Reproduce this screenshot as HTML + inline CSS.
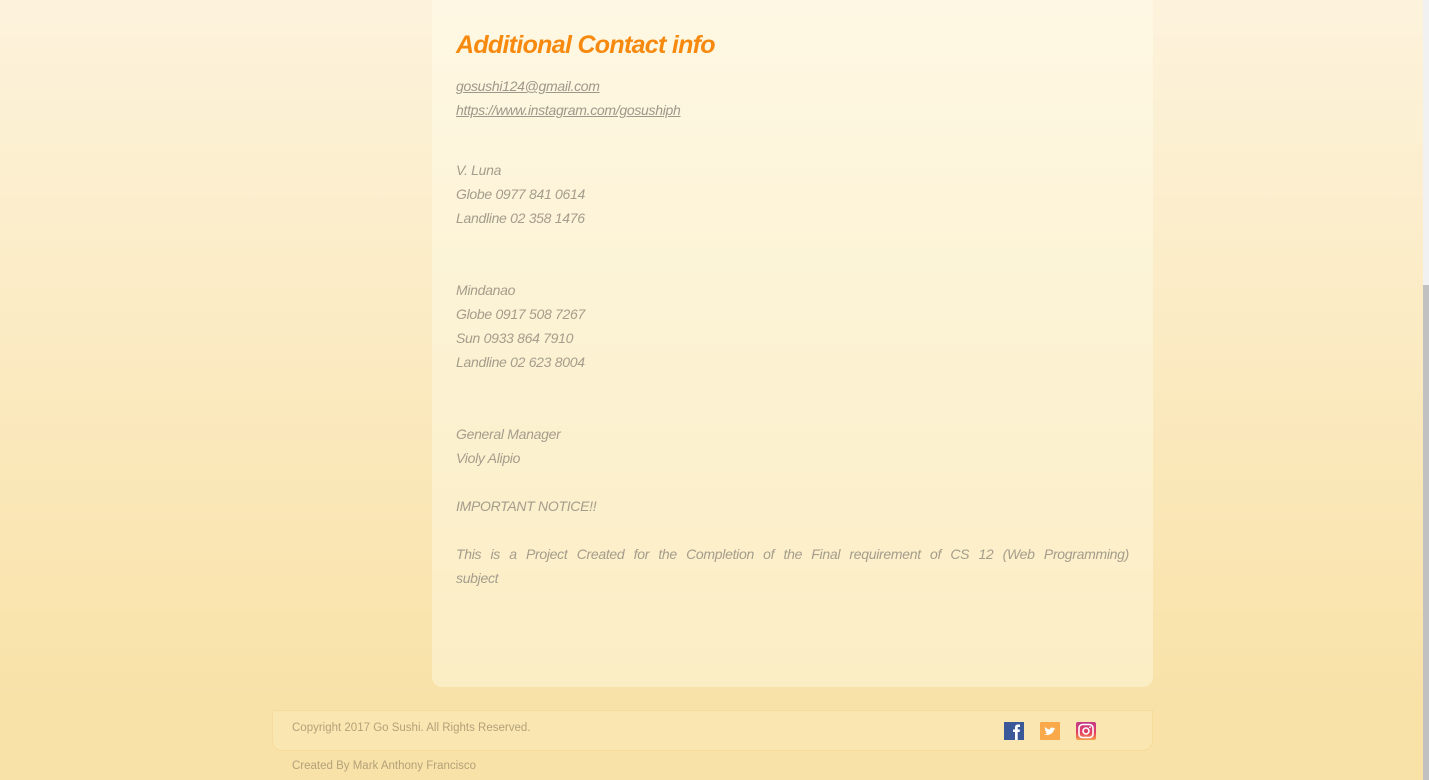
<!DOCTYPE html>
<html><head><style>
html,body{margin:0;padding:0;}
body{width:1429px;height:780px;overflow:hidden;position:relative;background:linear-gradient(#fdf3dc,#f9e2a8 700px,#f9e2a8);font-family:"Liberation Sans",sans-serif;}
.panel{position:absolute;left:432px;top:-20px;width:721px;height:707px;background:rgba(255,255,240,0.38);border-radius:10px;}
h1{position:absolute;left:456px;top:31px;margin:0;font-size:25px;font-style:italic;font-weight:bold;color:#f7890f;letter-spacing:-0.7px;}
.t{position:absolute;left:456px;font-size:14px;font-style:italic;color:#a59d8c;line-height:24px;letter-spacing:-0.3px;}
.t a{color:#9f978a;text-decoration:underline;}
.foot{position:absolute;left:272px;top:710px;width:879px;height:39px;border:1px solid #f5dc9a;border-radius:0 0 10px 10px;background:#fae6b0;}
.s{position:absolute;font-size:11.5px;color:#b3a27a;}
.sb{position:absolute;right:0;top:0;width:6px;height:780px;background:#f1f1f1;}
.th{position:absolute;right:0;top:285px;width:6px;height:495px;background:#c1c1c1;}
</style></head><body>
<div class="panel"></div>
<h1>Additional Contact info</h1>
<div class="t" style="top:74px"><a>gosushi124@gmail.com</a><br><a>https://www.instagram.com/gosushiph</a></div>
<div class="t" style="top:158px">V. Luna<br>Globe 0977 841 0614<br>Landline 02 358 1476</div>
<div class="t" style="top:278px">Mindanao<br>Globe 0917 508 7267<br>Sun 0933 864 7910<br>Landline 02 623 8004</div>
<div class="t" style="top:422px">General Manager<br>Violy Alipio<br><br>IMPORTANT NOTICE!!<br><br></div>
<div class="t" style="top:542px;width:673px;text-align:justify;text-align-last:left;word-spacing:4px">This is a Project Created for the Completion of the Final requirement of CS 12 (Web Programming) subject</div>
<div class="foot"></div>
<div class="s" style="left:292px;top:722px">Copyright 2017 Go Sushi. All Rights Reserved.</div>
<div class="s" style="left:292px;top:760px">Created By Mark Anthony Francisco</div>
<svg style="position:absolute;left:1004px;top:722px" width="20" height="18"><rect width="20" height="18" fill="#3b5998"/><path d="M11 18V10H9V7.5H11V5.5C11 3.5 12 2.5 14 2.5H16V5H14.5C13.8 5 13.7 5.3 13.7 6V7.5H16L15.6 10H13.7V18Z" fill="#fff"/></svg>
<svg style="position:absolute;left:1040px;top:722px" width="20" height="18"><rect width="20" height="18" rx="1" fill="#f9a84a"/><path d="M4 12c3 2 8 1 10-4l1.5-1.5-1.5.3.8-1.3-1.6.6C12 4.8 9.8 5.6 10 7.5 8 7.4 6.5 6.5 5 5c-.6 1.2 0 2.5 1 3l-1 -.2c0 1 .8 1.8 1.8 2-.5.2-1 .2-1.4.1.3.9 1.2 1.5 2.1 1.5C6.5 12 5.3 12.2 4 12z" fill="#fff"/></svg>
<svg style="position:absolute;left:1076px;top:722px" width="20" height="18"><defs><linearGradient id="g" x1="0" y1="0" x2="0" y2="1"><stop offset="0" stop-color="#c23a8a"/><stop offset="0.6" stop-color="#e4405f"/><stop offset="1" stop-color="#f7a04a"/></linearGradient></defs><rect width="20" height="18" rx="2" fill="url(#g)"/><rect x="3" y="2.5" width="14" height="13" rx="3.5" fill="none" stroke="#fff" stroke-width="1.6"/><circle cx="10" cy="9" r="3" fill="none" stroke="#fff" stroke-width="1.6"/><circle cx="14" cy="5.3" r="0.9" fill="#fff"/></svg>
<div class="sb"></div><div class="th"></div>
</body></html>
